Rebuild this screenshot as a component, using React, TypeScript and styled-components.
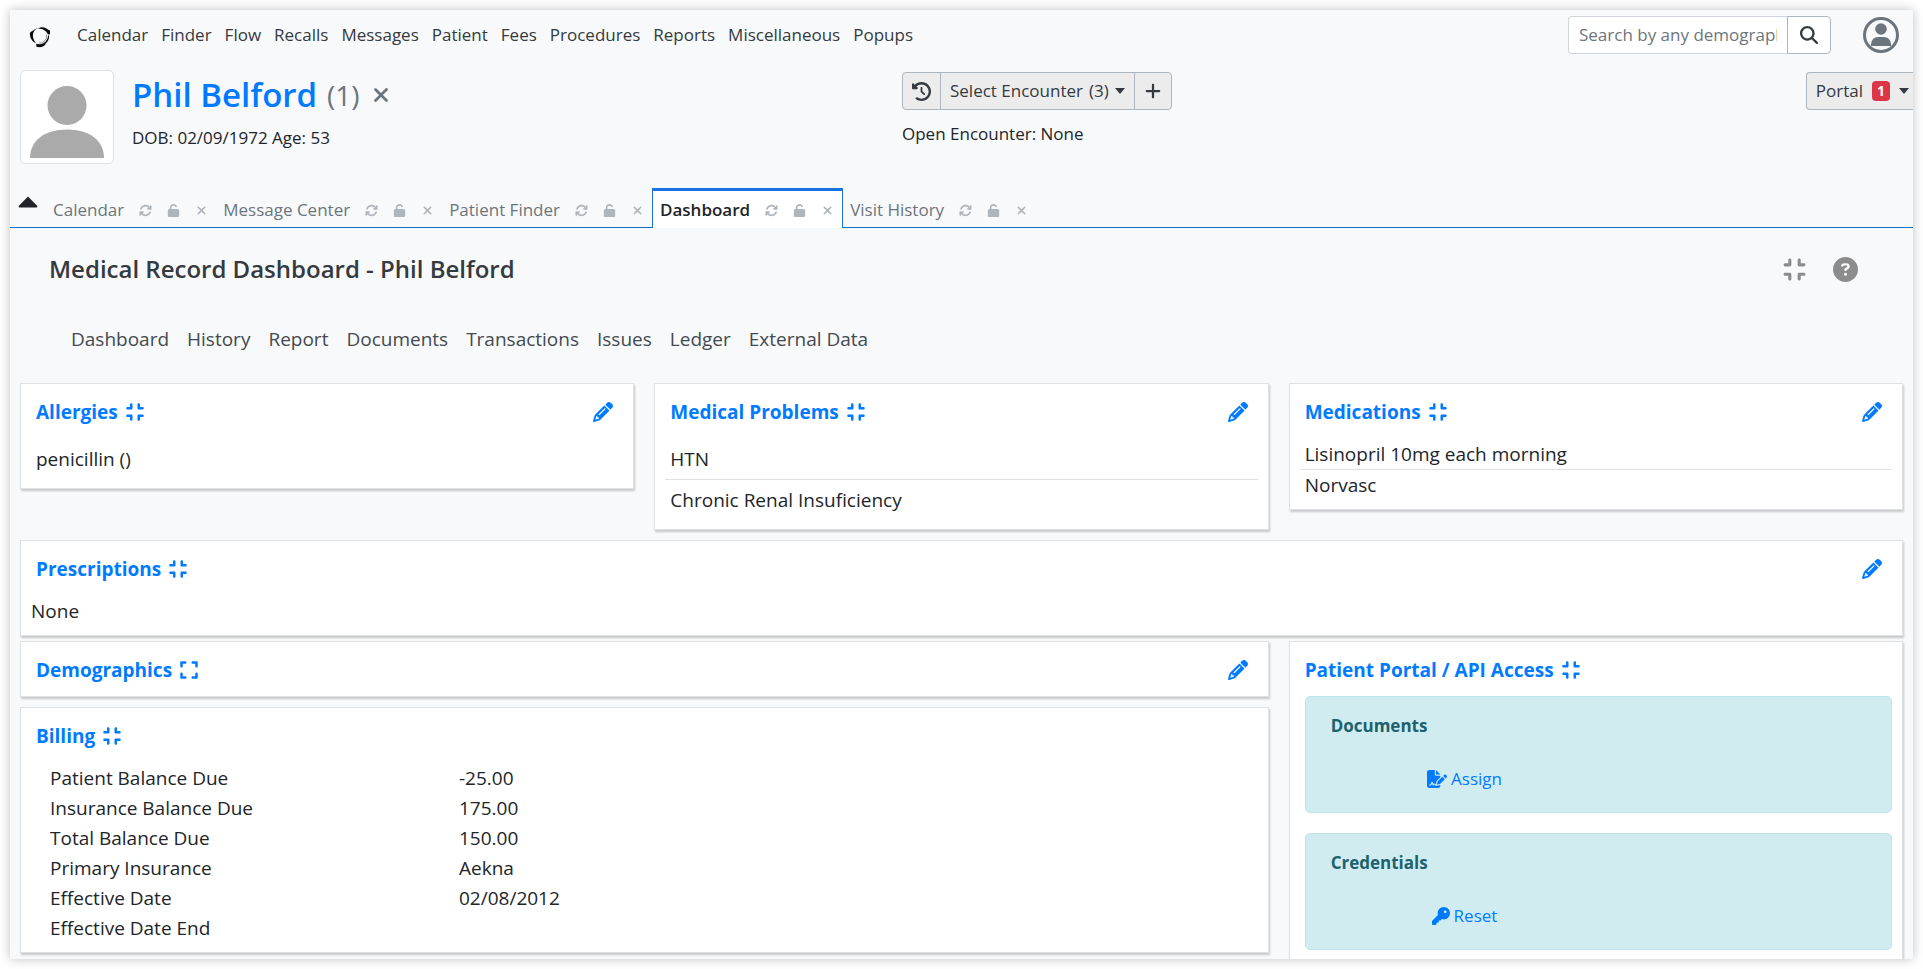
import React from "react";
import styled, { createGlobalStyle, css } from "styled-components";
import {
  FaArrowsRotate,
  FaCircleQuestion,
  FaClockRotateLeft,
  FaCompress,
  FaExpand,
  FaFileSignature,
  FaKey,
  FaMagnifyingGlass,
  FaPencil,
  FaPlus,
  FaUnlock,
  FaXmark,
} from "react-icons/fa6";

const Global = createGlobalStyle`
  * { box-sizing: border-box; }
  body {
    margin: 0;
    background: #fff;
    color: #212529;
    font: 19px/30px "Open Sans", "Noto Sans", sans-serif;
  }
  h1, h2, h3, p, ul, dl, dd { margin: 0; padding: 0; font: inherit; }
  ul { list-style: none; }
  a { color: inherit; text-decoration: none; }
  button, input { font: inherit; color: inherit; }
  button { padding: 0; border: 0; background: none; cursor: pointer; }
  svg { display: block; flex: none; }
`;

const Window = styled.div`
  display: flex;
  flex-direction: column;
  height: calc(100vh - 20px);
  margin: 10px;
  overflow: hidden;
  background: #f8f9fa;
  box-shadow: 0 0 10px rgba(0, 0, 0, 0.25);
  & > * { flex: none; }
`;

const TopBar = styled.header`
  display: flex;
  align-items: center;
  height: 50px;
  padding: 0 14px 0 19px;
`;

const MainNav = styled.nav`
  display: flex;
  flex: 1;
  gap: 13px;
  padding-left: 26px;
  font-size: 17px;
  color: #343a40;
`;

const SearchForm = styled.form`
  display: flex;
  width: 263px;
  height: 38px;
  margin-right: 32px;
  background: #fff;
  font-size: 17px;
`;

const SearchInput = styled.input`
  flex: 1;
  min-width: 0;
  padding: 0 10px;
  border: 1px solid #ced4da;
  border-right: 0;
  border-radius: 4px 0 0 4px;
  background: #fff;
  &::placeholder { color: #6c757d; opacity: 1; }
`;

const SearchButton = styled.button`
  display: grid;
  place-items: center;
  width: 44px;
  border: 1px solid #adb5bd;
  border-radius: 0 4px 4px 0;
  color: #343a40;
`;

const PatientBar = styled.section`
  display: grid;
  grid-template-columns: 882px 1fr auto;
  align-items: start;
  height: 125px;
  padding: 10px 0 0 10px;
`;

const Identity = styled.div`
  display: flex;
  gap: 18px;
`;

const Photo = styled.div`
  display: grid;
  place-items: end center;
  width: 94px;
  height: 94px;
  padding: 5px;
  border: 1px solid #dee2e6;
  border-radius: 5px;
  background: #fff;
`;

const NameRow = styled.h1`
  display: flex;
  align-items: center;
  gap: 10px;
  height: 50px;
  margin-bottom: 3px;
  font-size: 33px;
  color: #6c757d;
`;

const PatientName = styled.a`
  font-weight: 600;
  color: #007bff;
`;

const ChartNumber = styled.span`
  font-size: 28px;
`;

const Small = styled.p`
  font-size: 17px;
`;

const Encounter = styled.div`
  display: grid;
  gap: 9px;
  padding-top: 2px;
`;

const ButtonGroup = styled.div`
  display: flex;
`;

const Caret = styled.span`
  border: 5px solid transparent;
  border-top: 6px solid currentColor;
  border-bottom: 0;
`;

const BarButton = styled.button<{ $edge?: "left" | "right" | "cut" }>`
  display: flex;
  align-items: center;
  gap: 6px;
  height: 38px;
  padding: 0 9px;
  border: 1px solid #adb5bd;
  background: #ececed;
  font-size: 17px;
  color: #343a40;
  & + & { margin-left: -1px; }
  ${(p) => p.$edge === "left" && css`border-radius: 4px 0 0 4px;`}
  ${(p) => p.$edge === "right" && css`border-radius: 0 4px 4px 0;`}
  ${(p) => p.$edge === "cut" && css`
    gap: 9px;
    margin-top: 2px;
    padding-right: 4px;
    border-right: 0;
    border-radius: 4px 0 0 4px;
  `}
`;

const Badge = styled.span`
  padding: 0 5px;
  border-radius: 4px;
  background: #dc3545;
  color: #fff;
  font-size: 14px;
  line-height: 20px;
  font-weight: 700;
`;

const TabStrip = styled.div`
  display: flex;
  align-items: flex-end;
  height: 43px;
  padding-left: 8px;
  border-bottom: 1px solid #0f6fc5;
`;

const Collapse = styled.button`
  align-self: flex-start;
  margin: 11px 8px 0 0;
`;

const Tab = styled.div<{ $active?: boolean }>`
  display: flex;
  align-items: center;
  gap: 15px;
  height: 40px;
  margin-bottom: -1px;
  padding: 4px 8px 0 7px;
  font-size: 17px;
  color: #6c757d;
  ${(p) => p.$active && css`
    padding: 1px 8px 0 7px;
    border: 1px solid #1a73e0;
    border-top-width: 3px;
    border-bottom: 0;
    background: #fff;
    font-weight: 600;
    color: #212529;
  `}
`;

const TabIcon = styled.button`
  color: #adb5bd;
`;

const TitleRow = styled.div`
  display: flex;
  align-items: center;
  gap: 26px;
  height: 82px;
  padding: 0 55px 0 39px;
  color: #8c8c8c;
`;

const Title = styled.h2`
  flex: 1;
  font-size: 24px;
  font-weight: 600;
  color: #343a40;
`;

const SubNav = styled.nav`
  display: flex;
  gap: 18px;
  height: 73px;
  padding: 14px 0 0 61px;
  color: #434a50;
`;

const Content = styled.main`
  display: grid;
  padding: 0 10px;
`;

const Columns = styled.div<{ $gapAbove?: number; $gapBelow?: number }>`
  display: grid;
  grid-template-columns: repeat(3, 1fr);
  align-items: start;
  gap: 20px;
  margin-top: ${(p) => p.$gapAbove ?? 0}px;
  margin-bottom: ${(p) => p.$gapBelow ?? 0}px;
`;

const Stack = styled.div`
  display: grid;
  grid-column: span 2;
  gap: 10px;
`;

const CardBox = styled.section<{ $closed?: boolean }>`
  padding: 13px 10px ${(p) => (p.$closed ? 11 : 9)}px;
  border: 1px solid #dee2e6;
  background: #fff;
  box-shadow: 1px 2px 2px rgba(0, 0, 0, 0.2);
`;

const CardHead = styled.div`
  display: flex;
  align-items: center;
  justify-content: space-between;
  padding: 0 10px 0 5px;
  color: #007bff;
`;

const CardToggle = styled.button`
  display: flex;
  align-items: center;
  gap: 7px;
  font-weight: 700;
`;

const List = styled.ul<{ $dense?: boolean }>`
  margin-top: 12px;
  li { padding: ${(p) => (p.$dense ? "0 5px" : "5px")}; }
  li + li { border-top: 1px solid #dee2e6; }
`;

const Facts = styled.dl`
  display: grid;
  grid-template-columns: 409px 1fr;
  grid-auto-rows: 30px;
  padding: 12px 19px 0;
`;

const NoneText = styled.p`
  padding-top: 12px;
`;

const Panels = styled.div`
  display: grid;
  gap: 20px;
  padding: 11px 0 11px 5px;
`;

const Panel = styled.div`
  display: grid;
  grid-template-columns: 1fr 1fr;
  align-content: start;
  justify-items: center;
  row-gap: 23px;
  height: 117px;
  padding: 14px 25px;
  border: 1px solid #bee5eb;
  border-radius: 5px;
  background: #d1ecf1;
  font-size: 17px;
`;

const PanelTitle = styled.h3`
  grid-column: span 2;
  justify-self: start;
  font-weight: 700;
  color: #1c626d;
`;

const PanelLink = styled.a`
  display: flex;
  align-items: center;
  gap: 4px;
  color: #007bff;
`;

const Logo = () => (
  <svg width="22" height="28" viewBox="0 0 22 28" aria-hidden="true">
    <g fill="#0b0b0b">
      <path d="M4.6 9.2C2.2 11 .8 10.5 .9 13.2C1 17 3.2 20.6 7 22.2C4.9 19.6 3.8 17 3.9 14.6C3.9 12.6 4.3 11 6.2 8.8C8 7 9.5 6.8 11 6.7C8.5 6.6 6.3 7.6 4.6 9.2Z" />
      <path d="M9 7.6C13 5.2 17 6.4 18.8 8.6L21 9.4V13.6L18.6 13C17.3 10 14.4 8 9 7.6Z" />
      <path d="M19.6 13C20.8 17 19.2 20.4 16.6 22.8C15.6 25.8 11.5 27 7.4 25.8L7.2 22.8C12 24 15.4 22.4 17.4 19.4C18.6 17.5 19.2 15.5 19.6 13Z" />
    </g>
    <path d="M17.6 13.5Q18.4 18 15 20.6Q12.5 22.4 10 22" fill="none" stroke="#777" strokeWidth="0.8" />
  </svg>
);

const Avatar = () => (
  <svg width="36" height="36" viewBox="0 0 36 36" aria-hidden="true">
    <circle cx="18" cy="18" r="16.5" fill="none" stroke="#6c757d" strokeWidth="3" />
    <circle cx="18" cy="12" r="5.8" fill="#6c757d" />
    <path d="M8 29V27Q9 20 15 20H21Q27 20 28 27V29Z" fill="#6c757d" />
  </svg>
);

const Silhouette = () => (
  <svg width="74" height="72" viewBox="0 0 74 72" aria-hidden="true">
    <circle cx="37" cy="19.5" r="19.5" fill="#aaa" />
    <path d="M0 72C0 55 14 43.5 37 43.5S74 55 74 72Z" fill="#aaa" />
  </svg>
);

const menu = ["Calendar", "Finder", "Flow", "Recalls", "Messages", "Patient", "Fees", "Procedures", "Reports", "Miscellaneous", "Popups"];
const tabs = ["Calendar", "Message Center", "Patient Finder", "Dashboard", "Visit History"];
const sections = ["Dashboard", "History", "Report", "Documents", "Transactions", "Issues", "Ledger", "External Data"];
const billing = [
  ["Patient Balance Due", "-25.00"],
  ["Insurance Balance Due", "175.00"],
  ["Total Balance Due", "150.00"],
  ["Primary Insurance", "Aekna"],
  ["Effective Date", "02/08/2012"],
  ["Effective Date End", ""],
];

type CardProps = { title: string; closed?: boolean; editable?: boolean; children?: React.ReactNode };

function Card({ title, closed, editable, children }: CardProps) {
  return (
    <CardBox $closed={closed}>
      <CardHead>
        <CardToggle type="button" aria-expanded={!closed}>
          {title}
          {closed ? <FaExpand size={20} /> : <FaCompress size={20} />}
        </CardToggle>
        {editable && <a href="#edit" aria-label={`Edit ${title}`}><FaPencil size={20} /></a>}
      </CardHead>
      {children}
    </CardBox>
  );
}

export default function App() {
  return (
    <>
      <Global />
      <Window>
        <TopBar>
          <Logo />
          <MainNav>{menu.map((m) => <a href="#menu" key={m}>{m}</a>)}</MainNav>
          <SearchForm>
            <SearchInput type="text" aria-label="Search patients" placeholder="Search by any demographics" />
            <SearchButton type="button" aria-label="Search"><FaMagnifyingGlass size={18} /></SearchButton>
          </SearchForm>
          <button type="button" aria-label="Account"><Avatar /></button>
        </TopBar>

        <PatientBar>
          <Identity>
            <Photo><Silhouette /></Photo>
            <div>
              <NameRow>
                <PatientName href="#patient">Phil Belford</PatientName>
                <ChartNumber>(1)</ChartNumber>
                <button type="button" aria-label="Close patient"><FaXmark size={22} /></button>
              </NameRow>
              <Small>DOB: 02/09/1972 Age: 53</Small>
            </div>
          </Identity>
          <Encounter>
            <ButtonGroup>
              <BarButton type="button" $edge="left" aria-label="Encounter history"><FaClockRotateLeft size={19} /></BarButton>
              <BarButton type="button"><span>Select Encounter</span><span>(3)</span><Caret /></BarButton>
              <BarButton type="button" $edge="right" aria-label="New encounter"><FaPlus size={18} /></BarButton>
            </ButtonGroup>
            <Small>Open Encounter: None</Small>
          </Encounter>
          <BarButton type="button" $edge="cut">Portal<Badge>1</Badge><Caret /></BarButton>
        </PatientBar>

        <TabStrip>
          <Collapse type="button" aria-label="Collapse patient bar">
            <svg width="20" height="12" viewBox="0 0 20 12"><path d="M10 0.5L19.3 10Q19.8 11.5 18 11.5H2Q0.2 11.5 0.7 10Z" fill="#212529" /></svg>
          </Collapse>
          {tabs.map((t) => (
            <Tab key={t} $active={t === "Dashboard"}>
              <a href="#tab">{t}</a>
              <TabIcon type="button" aria-label={`Refresh ${t}`}><FaArrowsRotate size={13} /></TabIcon>
              <TabIcon type="button" aria-label={`Lock ${t}`}><FaUnlock size={13} /></TabIcon>
              <TabIcon type="button" aria-label={`Close ${t}`}><FaXmark size={13} /></TabIcon>
            </Tab>
          ))}
        </TabStrip>

        <TitleRow>
          <Title>Medical Record Dashboard - Phil Belford</Title>
          <button type="button" aria-label="Compress view"><FaCompress size={25} /></button>
          <button type="button" aria-label="Help"><FaCircleQuestion size={25} /></button>
        </TitleRow>
        <SubNav>{sections.map((s) => <a href="#section" key={s}>{s}</a>)}</SubNav>

        <Content>
          <Columns $gapBelow={10}>
            <Card title="Allergies" editable>
              <List><li>penicillin ()</li></List>
            </Card>
            <Card title="Medical Problems" editable>
              <List><li>HTN</li><li>Chronic Renal Insuficiency</li></List>
            </Card>
            <Card title="Medications" editable>
              <List $dense><li>Lisinopril 10mg each morning</li><li>Norvasc</li></List>
            </Card>
          </Columns>
          <Card title="Prescriptions" editable>
            <NoneText>None</NoneText>
          </Card>
          <Columns $gapAbove={5}>
            <Stack>
              <Card title="Demographics" closed editable />
              <Card title="Billing">
                <Facts>
                  {billing.map(([k, v]) => (
                    <React.Fragment key={k}><dt>{k}</dt><dd>{v}</dd></React.Fragment>
                  ))}
                </Facts>
              </Card>
            </Stack>
            <Card title="Patient Portal / API Access">
              <Panels>
                <Panel>
                  <PanelTitle>Documents</PanelTitle>
                  <PanelLink href="#assign"><FaFileSignature size={20} />Assign</PanelLink>
                </Panel>
                <Panel>
                  <PanelTitle>Credentials</PanelTitle>
                  <PanelLink href="#reset"><FaKey size={18} />Reset</PanelLink>
                </Panel>
              </Panels>
            </Card>
          </Columns>
        </Content>
      </Window>
    </>
  );
}
